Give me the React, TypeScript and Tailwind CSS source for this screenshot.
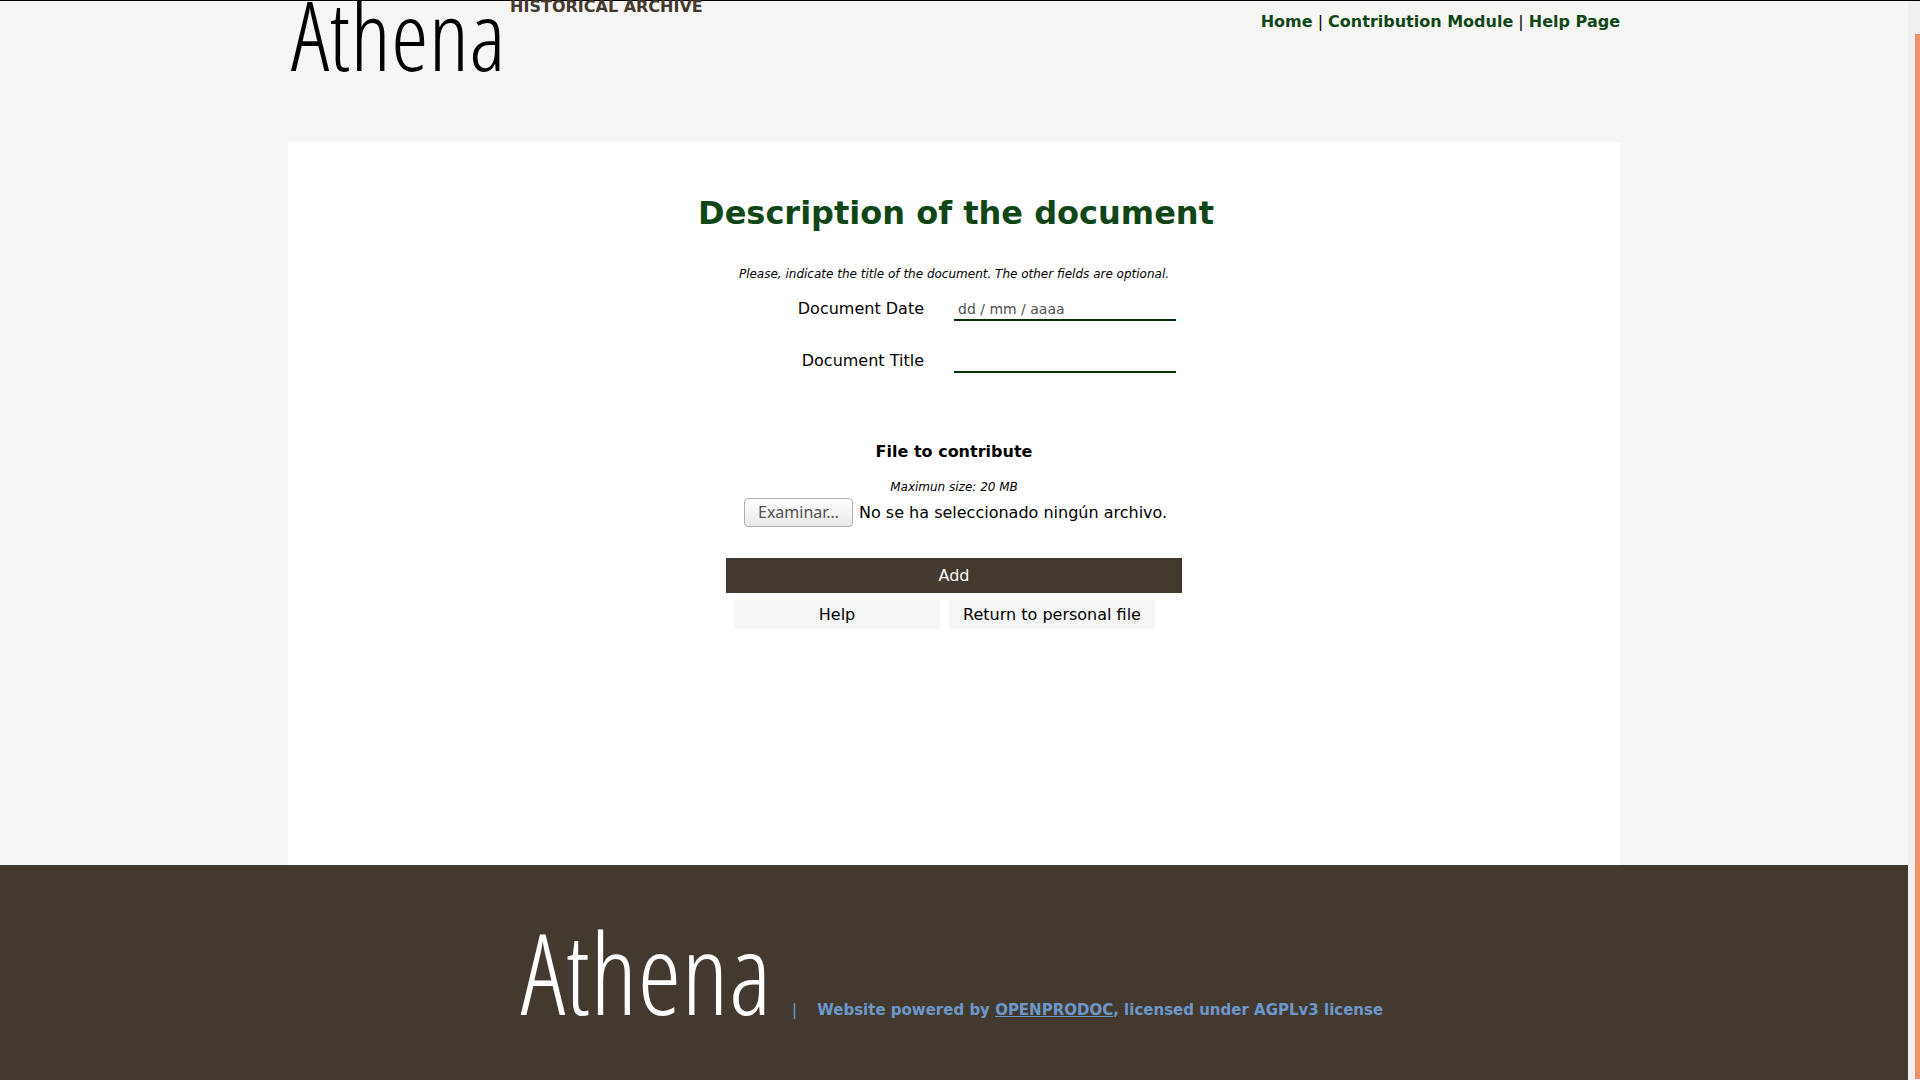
import React from "react";

function Wordmark({ className }: { className: string }) {
  return (
    <span className={`font-['Open_Sans_Condensed_Light','Roboto_Condensed',sans-serif] leading-none ${className}`}>
      Athena
    </span>
  );
}

function Header() {
  return (
    <header className="flex h-[141px] justify-between">
      <div className="flex items-start gap-1">
        <a href="#home" className="-mt-[15px] pl-[3px]">
          <Wordmark className="block text-[96px] text-black" />
        </a>
        <p className="-mt-1 font-bold leading-5 text-[#44392f]">HISTORICAL ARCHIVE</p>
      </div>
      <nav className="pt-[11px] leading-5 text-black">
        <a href="#home" className="font-bold text-[#0f4616]">Home</a>
        {" | "}
        <a href="#contribution" className="font-bold text-[#0f4616]">Contribution Module</a>
        {" | "}
        <a href="#help" className="font-bold text-[#0f4616]">Help Page</a>
      </nav>
    </header>
  );
}

function Field({ id, label, placeholder }: { id: string; label: string; placeholder?: string }) {
  return (
    <div className="flex h-[52px] items-start gap-[30px]">
      <label htmlFor={id} className="w-[198px] text-right leading-[26px]">{label}</label>
      <input
        id={id}
        type="text"
        placeholder={placeholder}
        className="h-[25px] w-[222px] border-b-2 border-[#053005] bg-transparent px-1 pt-0.5 text-[14px] text-black outline-none placeholder:text-[#505050]"
      />
    </div>
  );
}

function DocumentForm() {
  return (
    <form className="mx-auto flex w-[456px] flex-col pt-[49px] leading-6">
      <h1 className="self-center whitespace-nowrap pl-1 text-[32px] font-bold leading-[44px] text-[#0f4616]">
        Description of the document
      </h1>
      <p className="mt-[27px] text-center text-[12px] italic">
        Please, indicate the title of the document. The other fields are optional.
      </p>
      <div className="mt-2.5 flex flex-col">
        <Field id="date" label="Document Date" placeholder="dd / mm / aaaa" />
        <Field id="title" label="Document Title" />
      </div>
      <h2 className="mt-10 text-center font-bold">File to contribute</h2>
      <p className="mt-[13px] text-center text-[12px] italic leading-5">Maximun size: 20 MB</p>
      <label className="ml-[18px] mt-px flex items-center gap-1.5 whitespace-nowrap">
        <input type="file" className="sr-only" />
        <span className="flex h-[29px] w-[109px] items-center justify-center rounded border border-[#b0b0b0] bg-linear-to-b from-white to-[#e9e9e9] pb-0.5 font-['Noto_Sans',sans-serif] text-[#505050]">
          Examinar…
        </span>
        No se ha seleccionado ningún archivo.
      </label>
      <button type="submit" className="mt-[31px] h-[35px] bg-[#44392f] text-white">Add</button>
      <div className="mt-[7px] flex gap-[9px] pl-2">
        <button type="button" className="h-[29px] w-[206px] bg-[#f5f5f5]">Help</button>
        <button type="button" className="h-[29px] w-[206px] whitespace-nowrap bg-[#f5f5f5]">
          Return to personal file
        </button>
      </div>
    </form>
  );
}

function Footer() {
  return (
    <footer className="flex h-[215px] shrink-0 items-baseline justify-center bg-[#44392f] pr-1 pt-[51px] text-[#6c98cc]">
      <Wordmark className="text-[112px] text-white" />
      <span className="mx-5">|</span>
      <p className="text-[15px] font-bold">
        Website powered by <a href="#openprodoc" className="underline">OPENPRODOC</a>, licensed under AGPLv3 license
      </p>
    </footer>
  );
}

export default function App() {
  return (
    <div className="flex min-h-screen border-t border-black bg-[#f6f6f4] font-['DejaVu_Sans',sans-serif] text-base text-black">
      <div className="flex min-w-0 flex-1 flex-col">
        <div className="flex flex-1 flex-col px-72">
          <Header />
          <main className="flex-1 bg-white">
            <DocumentForm />
          </main>
        </div>
        <Footer />
      </div>
      <div className="flex w-3 justify-end bg-[#f2f0ef] pt-[33px] pb-px">
        <div className="w-[5px] bg-[#f09068]" />
      </div>
    </div>
  );
}
